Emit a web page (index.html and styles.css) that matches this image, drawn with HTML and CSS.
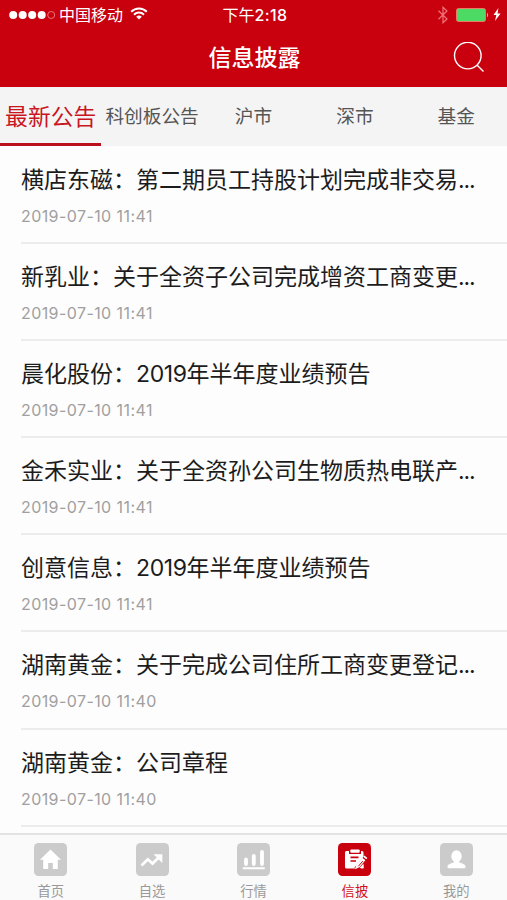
FILE: index.html
```html
<!DOCTYPE html>
<html lang="zh-CN">
<head>
    <meta charset="UTF-8">
    <meta name="viewport" content="width=device-width, initial-scale=1.0">
    <title>信息披露</title>
    <link rel="stylesheet" href="styles.css">
</head>
<body>

    <header class="header">
        <div class="status">
            <div class="status-left">
                <svg class="signal" width="47" height="10" viewBox="0 0 47 10">
                    <g fill="#fff">
                        <circle cx="4.2" cy="5" r="4"/>
                        <circle cx="13.7" cy="5" r="4"/>
                        <circle cx="23.2" cy="5" r="4"/>
                        <circle cx="32.7" cy="5" r="4"/>
                    </g>
                    <circle cx="42.2" cy="5" r="3.5" fill="none" stroke="#ee7478" stroke-width="1"/>
                </svg>
                <span class="carrier">中国移动</span>
                <svg class="wifi" width="18" height="13" viewBox="0 0 18 13" fill="none" stroke="#fff" stroke-width="2">
                    <path d="M1.2 4.7a11 11 0 0 1 15.6 0"/>
                    <path d="M4 7.7a7 7 0 0 1 10 0"/>
                    <path d="M9 12.6L6.2 9.8a4 4 0 0 1 5.6 0z" fill="#fff" stroke="none"/>
                </svg>
            </div>
            <div class="time">下午<span class="clock">2:18</span></div>
            <div class="status-right">
                <svg class="bluetooth" width="12" height="18" viewBox="0 0 12 18" fill="none" stroke="#ee7478" stroke-width="1.2">
                    <path d="M1.5 4.8l8.5 8.2L6 16.8V1.2L10 5l-8.5 8.2"/>
                </svg>
                <svg class="battery" width="34" height="14" viewBox="0 0 34 14">
                    <rect x=".5" y=".5" width="29" height="13" rx="2" fill="#4cd964" stroke="#ed7a68"/>
                    <path d="M31 4.5q2.2 2.5 0 5z" fill="#f6b5b5"/>
                </svg>
                <svg class="bolt" width="8" height="13" viewBox="0 0 8 13">
                    <path d="M5.4 0L.5 7h2.8L2 13l5.6-7.4h-3z" fill="#fff"/>
                </svg>
            </div>
        </div>
        <div class="navbar">
            <h1>信息披露</h1>
            <svg class="search" width="32" height="32" viewBox="0 0 32 32" fill="none" stroke="#fff" stroke-width="1.4">
                <circle cx="14.8" cy="13.6" r="13.3"/>
                <path d="M24.2 23.2l6.3 6.3"/>
            </svg>
        </div>
    </header>

    <nav class="tabs">
        <a class="tab active">最新公告</a>
        <a class="tab">科创板公告</a>
        <a class="tab">沪市</a>
        <a class="tab">深市</a>
        <a class="tab">基金</a>
    </nav>

    <main class="list">
        <article class="item">
            <h2>横店东磁：第二期员工持股计划完成非交易<span class="dots">...</span></h2>
            <time>2019-07-10 11:41</time>
        </article>
        <article class="item">
            <h2>新乳业：关于全资子公司完成增资工商变更<span class="dots">...</span></h2>
            <time>2019-07-10 11:41</time>
        </article>
        <article class="item">
            <h2>晨化股份：<span class="num">2019</span>年半年度业绩预告</h2>
            <time>2019-07-10 11:41</time>
        </article>
        <article class="item">
            <h2>金禾实业：关于全资孙公司生物质热电联产<span class="dots">...</span></h2>
            <time>2019-07-10 11:41</time>
        </article>
        <article class="item">
            <h2>创意信息：<span class="num">2019</span>年半年度业绩预告</h2>
            <time>2019-07-10 11:41</time>
        </article>
        <article class="item">
            <h2>湖南黄金：关于完成公司住所工商变更登记<span class="dots">...</span></h2>
            <time>2019-07-10 11:40</time>
        </article>
        <article class="item">
            <h2>湖南黄金：公司章程</h2>
            <time>2019-07-10 11:40</time>
        </article>
    </main>

    <footer class="tabbar">
        <a class="tabbar-item">
            <svg width="33" height="33" viewBox="0 0 33 33">
                <rect width="33" height="33" rx="4.5" fill="#cbcbcb"/>
                <path d="M16.5 6.5L27 16.8h-3.2V26h-5v-6h-4.6v6h-5v-9.2H6z" fill="#fff"/>
            </svg>
            <span>首页</span>
        </a>
        <a class="tabbar-item">
            <svg width="33" height="33" viewBox="0 0 33 33">
                <rect width="33" height="33" rx="4.5" fill="#cbcbcb"/>
                <path d="M5.5 22.5l6.3-6.2 4.7 4.2 7-6.8" fill="none" stroke="#fff" stroke-width="2.8"/>
                <path d="M17.5 11.3h8.8v8.6z" fill="#fff"/>
            </svg>
            <span>自选</span>
        </a>
        <a class="tabbar-item">
            <svg width="33" height="33" viewBox="0 0 33 33">
                <rect width="33" height="33" rx="4.5" fill="#cbcbcb"/>
                <path d="M9 16.5V21M16.8 12.8V21M25 8.8V21" fill="none" stroke="#fff" stroke-width="3.8" stroke-linecap="round"/>
                <path d="M6.5 25.2H27" stroke="#fff" stroke-width="2" stroke-linecap="round"/>
            </svg>
            <span>行情</span>
        </a>
        <a class="tabbar-item active">
            <svg width="33" height="33" viewBox="0 0 33 33">
                <rect width="33" height="33" rx="4.5" fill="#c9000e"/>
                <path d="M8.5 8H11v3h12V8h1q1.5 0 1.5 1.5v16h-17Q7 25.500 7 24V9.500Q7 8 8.500 8z" fill="#fff"/>
                <rect x="12.3" y="6.5" width="9.4" height="3.2" rx="1" fill="#fff"/>
                <path d="M12.5 14.3h8M12.5 18H18" stroke="#c9000e" stroke-width="1.7"/>
                <path d="M18.5 26.500L28 15" stroke="#c9000e" stroke-width="5.5"/>
                <path d="M17 26.3l1.400-4.600 6-7 3 2.500-6 7z" fill="#fff"/>
                <path d="M25.2 13.8l1.200-1.400 3 2.500-1.200 1.400z" fill="#fff"/>
                <path d="M20.3 23.3l4.500-5.200" stroke="#c9000e" stroke-width="1"/>
                <path d="M21.5 25h4v-4.500z" fill="#fff"/>
            </svg>
            <span>信披</span>
        </a>
        <a class="tabbar-item">
            <svg width="33" height="33" viewBox="0 0 33 33">
                <rect width="33" height="33" rx="4.5" fill="#cbcbcb"/>
                <ellipse cx="16.5" cy="13.2" rx="5.2" ry="6" fill="#fff"/>
                <path d="M13.8 17h5.4v2.5q5.8 1.5 6.3 3.5.4 2.3-1 2.3h-16q-1.4 0-1-2.3.5-2 6.3-3.5z" fill="#fff"/>
            </svg>
            <span>我的</span>
        </a>
    </footer>

</body>
</html>
```
FILE: styles.css
```css
* {
    box-sizing: border-box;
}
body {
    display: flex;
    flex-direction: column;
    height: 900px;
    margin: 0;
    overflow: hidden;
    font-family: Inter, "Noto Sans CJK SC", sans-serif;
    background-color: #fdfdfd;
    color: #1c1c1c;
}
h1, h2 {
    margin: 0;
    font-weight: 400;
}
svg {
    display: block;
    flex: none;
}

/* header */
.header {
    flex: none;
    height: 87px;
    background-color: #c9000e;
    color: #fff;
}
.status {
    display: grid;
    grid-template-columns: 1fr auto 1fr;
    align-items: center;
    height: 29px;
    padding: 0 6px 0 9px;
    font-size: 16px;
    line-height: 28px;
}
.status-left, .status-right {
    display: flex;
    align-items: center;
}
.carrier {
    margin: 0 7px 0 3px;
}
.wifi {
    margin-bottom: 2px;
}
.clock {
    font-weight: 500;
    letter-spacing: 0.4px;
}
.status-right {
    justify-content: flex-end;
}
.battery {
    margin: 0 3px 0 7px;
}
.navbar {
    display: grid;
    grid-template-columns: 1fr auto 1fr;
    align-items: center;
    height: 58px;
    padding-right: 22px;
    padding-left: 24px;
}
.navbar h1 {
    grid-column: 2;
    font-size: 23px;
    font-weight: 500;
    line-height: 58px;
}
.search {
    justify-self: end;
}

/* category tabs */
.tabs {
    display: grid;
    grid-template-columns: repeat(5, 1fr);
    flex: none;
    height: 59px;
    background-color: #f4f4f4;
    color: #555;
}
.tab {
    display: flex;
    justify-content: center;
    height: 59px;
    font-size: 18.7px;
    line-height: 59px;
    white-space: nowrap;
}
.tab.active {
    border-bottom: 3px solid #b9101c;
    color: #c9151f;
    font-size: 22.8px;
}

/* announcements */
.list {
    flex: 1;
    padding-top: 1px;
    padding-left: 21px;
}
.item {
    height: 97.1px;
    padding-top: 17px;
    border-bottom: 2px solid #ececec;
}
.item h2 {
    font-size: 23px;
    line-height: 32px;
    white-space: nowrap;
}
.num {
    letter-spacing: -0.4px;
}
.dots {
    letter-spacing: -1.1px;
}
.item time {
    display: block;
    margin-top: 10px;
    color: #a0a0a0;
    font-size: 16px;
    letter-spacing: 0.42px;
    line-height: 20px;
}

/* bottom bar */
.tabbar {
    display: grid;
    grid-template-columns: repeat(5, 1fr);
    flex: none;
    height: 67px;
    border-top: 2px solid #e3e3e3;
    background-color: #fafafa;
    color: #999;
}
.tabbar-item {
    display: flex;
    flex-direction: column;
    align-items: center;
    padding-top: 8px;
    font-size: 13.3px;
    line-height: 18px;
}
.tabbar-item span {
    margin-top: 6px;
}
.tabbar-item.active {
    color: #d0101c;
}
```
